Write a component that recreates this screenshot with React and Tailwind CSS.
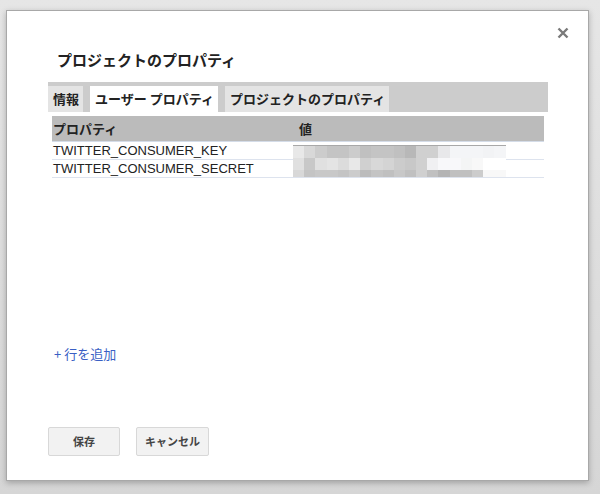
const blur = [
  ['#e8e8e8', '#d8d8d8', '#cccccc', '#c4c4c4', '#c4c4c4', '#cccccc', '#c0c0c0', '#c4c4c4', '#c4c4c4', '#c0c0c0', '#b8b8b8', '#d0d0d0', '#d0d0d0', '#e8e8ea', '#f4f5f7', '#f4f5f7', '#f4f5f7', '#f2f3f5', '#f4f5f7'],
  ['#e0e0e0', '#c8c8c8', '#e0e0e0', '#e4e4e4', '#dcdcdc', '#e8e8e8', '#d0d0d0', '#d8d8d8', '#d4d4d4', '#cccccc', '#c8c8c8', '#d0d0d0', '#f0f0f2', '#f8f8fa', '#f8f8fa', '#f4f5f5', '#f8f8f8', '#ffffff', '#ffffff'],
  ['#d8d8d8', '#c4c4c4', '#c8c8c8', '#c8c8c8', '#c4c4c4', '#cccccc', '#bcbcbc', '#c4c4c4', '#c0c0c0', '#c8c8c8', '#c0c0c0', '#d0d0d0', '#c0c0c0', '#b4b4b4', '#c0c0c0', '#c0c0c0', '#cccccc', '#f8f8f8', '#f8f8f8'],
];

const rows = ['TWITTER_CONSUMER_KEY', 'TWITTER_CONSUMER_SECRET'];

export default function App() {
  return (
    <div
      className="h-[494px] w-[600px] overflow-hidden bg-gradient-to-b from-[#e6e6e6] to-[#d6d6d6] pt-[10px] pl-[6px]"
      style={{ fontFamily: '"Liberation Sans", "Noto Sans CJK JP", sans-serif' }}
    >
      <div className="relative flex h-[471px] w-[583px] flex-col border border-[#a8a8a8] bg-white pl-[41px] pt-[39px] shadow-[0_2px_6px_rgba(0,0,0,0.25)]">
        <svg
          className="absolute right-[19px] top-[16px]"
          width="12"
          height="12"
          viewBox="0 0 12 12"
        >
          <path d="M1.5 1.5 L10.5 10.5 M10.5 1.5 L1.5 10.5" stroke="#7a7a7a" strokeWidth="2.4" />
        </svg>

        <h1
          className="ml-[9px] h-[20px] text-[15px] font-bold leading-[20px] text-[#222]"
          style={{ fontFamily: '"Noto Sans CJK JP", sans-serif' }}
        >
          プロジェクトのプロパティ
        </h1>

        <div
          className="mt-[12px] flex h-[30px] w-[500px] items-end gap-[7px] bg-[#cccccc] text-[13px] font-bold text-[#222]"
          style={{ fontFamily: '"Noto Sans CJK JP", sans-serif' }}
        >
          <div className="flex h-[26px] items-center bg-[#e4e4e4] pl-[5px] pr-[4px]">情報</div>
          <div className="flex h-[26px] items-center bg-white pl-[5px] pr-[4px]">ユーザー プロパティ</div>
          <div className="flex h-[26px] items-center bg-[#e4e4e4] pl-[5px] pr-[4px]">プロジェクトのプロパティ</div>
        </div>

        <div className="relative ml-[4px] mt-[4px] w-[492px] text-[13px] text-[#222]">
          <div
            className="flex h-[26px] items-center border-b border-[#d4dce8] bg-[#bbbbbb] font-bold"
            style={{ fontFamily: '"Noto Sans CJK JP", sans-serif' }}
          >
            <div className="w-[246px] pl-[1px]">プロパティ</div>
            <div className="pl-[1px]">値</div>
          </div>
          {rows.map((r) => (
            <div key={r} className="flex h-[18px] items-center border-b border-[#dde3ee]">
              <div className="w-[246px] pl-[1px] leading-[17px]">{r}</div>
            </div>
          ))}
          <div className="absolute left-[241px] top-[29px] flex flex-col border-t border-[#a8a8a8]">
            {blur.map((row, i) => (
              <div key={i} className={i === 2 ? 'flex h-[7px]' : 'flex h-[12px]'}>
                {row.map((c, j) => (
                  <div key={j} className="w-[11.2px]" style={{ backgroundColor: c }} />
                ))}
              </div>
            ))}
          </div>
        </div>

        <div
          className="ml-[6px] mt-[166px] h-[20px] text-[13px] leading-[20px] text-[#3a5fc4]"
          style={{ fontFamily: '"Noto Sans CJK JP", sans-serif' }}
        >
          +&nbsp;行を追加
        </div>

        <div
          className="mt-[63px] flex gap-[16px] text-[11px] font-bold text-[#444]"
          style={{ fontFamily: '"Noto Sans CJK JP", sans-serif' }}
        >
          <button className="h-[29px] w-[72px] rounded-[2px] border border-[#d8d8d8] bg-[#f2f2f2]">保存</button>
          <button className="h-[29px] w-[73px] rounded-[2px] border border-[#d8d8d8] bg-[#f2f2f2]">キャンセル</button>
        </div>
      </div>
    </div>
  );
}
